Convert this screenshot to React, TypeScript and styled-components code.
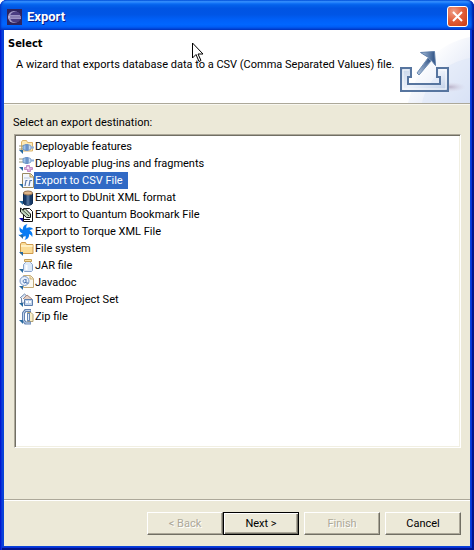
import React, { useState } from "react";
import styled, { createGlobalStyle } from "styled-components";

const GlobalStyle = createGlobalStyle`
  *, *::before, *::after { box-sizing: border-box; }
  body { margin: 0; background: #ffffff; }
  button { font: inherit; }
`;

const Dialog = styled.main`
  position: relative;
  display: flex;
  flex-direction: column;
  min-height: 100vh;
  padding: 0 4px 4px;
  border-radius: 7px 7px 0 0;
  background: #0842d8;
  box-shadow: inset 1px 0 #0019cf, inset 2px 0 #0831d9, inset -2px -2px #00138c, inset -3px -3px #0831d9;
  color: #000000;
  font: 11px/13px Roboto, "Liberation Sans", sans-serif;
`;

const TitleBar = styled.header`
  display: flex;
  align-items: center;
  gap: 5px;
  height: 30px;
  margin: 0 -4px;
  padding: 3px 6px 0 7px;
  border-radius: 7px 7px 0 0;
  background: linear-gradient(
    #0058e0 0%, #3a93ff 6%, #1676f8 10%, #0462ec 16%, #0054e3 28%,
    #0055e5 48%, #0060f8 66%, #0066ff 82%, #005cf4 90%, #003fd0 97%, #0038c0 100%
  );
  box-shadow: inset 2px 0 2px -1px #0030c0, inset -3px 0 2px -1px #0020a0;
`;

const TitleText = styled.h1`
  flex: 1;
  margin: 0;
  color: #ffffff;
  font: bold 13px/18px Roboto, "Noto Sans", sans-serif;
  text-shadow: 1px 1px #0a1883;
`;

const CloseButton = styled.button`
  display: grid;
  place-items: center;
  width: 21px;
  height: 21px;
  padding: 0;
  border: 1px solid #ffffff;
  border-radius: 3px;
  background: radial-gradient(circle at 30% 25%, #f0a088 0%, #e2603c 45%, #c93a10 100%);
`;

const Banner = styled.section`
  display: flex;
  justify-content: space-between;
  height: 74px;
  border-bottom: 1px solid #aca899;
  background: #ffffff;
`;

const BannerText = styled.div`
  min-width: 0;
  padding: 7px 0 0 4px;
`;

const BannerTitle = styled.h2`
  margin: 0;
  font: bold 11px/14px "DejaVu Sans Condensed", "DejaVu Sans", sans-serif;
`;

const BannerMessage = styled.p`
  margin: 7px 0 0 8px;
  white-space: nowrap;
`;

const BannerArt = styled.svg`
  flex: none;
  width: 76px;
  height: 73px;
`;

const Body = styled.section`
  display: flex;
  flex: 1;
  flex-direction: column;
  padding: 11px 9px 51px 10px;
  border-top: 1px solid #f8f7f0;
  background: #ece9d8;
`;

const ListLabel = styled.h3`
  margin: 0 0 5px -1px;
  font-size: 11px;
  font-weight: normal;
`;

const List = styled.div`
  display: flex;
  flex: 1;
  flex-direction: column;
  align-items: flex-start;
  padding: 3px;
  border: 1px solid;
  border-color: #aca899 #ffffff #ffffff #aca899;
  background: #ffffff;
  box-shadow: inset 1px 1px #716f64, inset -1px -1px #f1efe2;
`;

const Row = styled.button`
  display: flex;
  align-items: center;
  height: 17px;
  padding: 0;
  border: 0;
  background: none;
  color: inherit;
  text-align: left;
  outline: none;
`;

const RowIcon = styled.svg`
  flex: none;
  width: 16px;
  height: 16px;
`;

const RowText = styled.span<{ $selected: boolean }>`
  height: 17px;
  padding: 2px 5px 2px 1px;
  background: ${(p) => (p.$selected ? "#316ac5" : "transparent")};
  color: ${(p) => (p.$selected ? "#ffffff" : "inherit")};
  white-space: nowrap;
`;

const Footer = styled.footer`
  display: flex;
  justify-content: flex-end;
  gap: 5px;
  padding: 12px 9px 11px;
  border-top: 1px solid #aca899;
  background: #ece9d8;
  box-shadow: inset 0 1px #ffffff;
`;

const ButtonPair = styled.div`
  display: flex;
`;

const PushButton = styled.button<{ $primary?: boolean }>`
  width: 76px;
  height: 23px;
  padding: 0 0 1px;
  border: 1px solid;
  border-color: ${(p) => (p.$primary ? "#000000" : "#ffffff #716f64 #716f64 #ffffff")};
  background: #ece9d8;
  box-shadow: ${(p) =>
    p.$primary
      ? "inset 1px 1px #ffffff, inset -1px -1px #716f64, inset -2px -2px #aca899"
      : "inset -1px -1px #aca899"};
  color: #000000;

  &:disabled {
    color: #aca899;
    text-shadow: 1px 1px #ffffff;
  }
`;

const Pointer = styled.svg`
  position: absolute;
  top: 42px;
  left: 192px;
  width: 13px;
  height: 21px;
  pointer-events: none;
`;

const Plug = ({ y = 5 }: { y?: number }) => (
  <g transform={`translate(0 ${y})`}>
    <path d="M1 2h4M1 5h4" stroke="#9d9a78" />
    <path d="M5 1.500 8 .5v6l-3-1z" fill="#9cc2ea" stroke="#5c86bb" strokeWidth=".8" />
    <path d="M8 0h2v7H8z" fill="#6b93ca" />
    <path d="M10.500.5 13 2v3l-2.500 1.500z" fill="#c7dcf3" stroke="#6a92c6" strokeWidth=".8" />
    <path d="M13 3.500h3" stroke="#8fb0da" strokeWidth="2" />
  </g>
);

const drawings: Record<string, React.ReactNode> = {
  features: (
    <>
      <path d="M3.500 12V3l1-1.500h4l1 2h5V12z" fill="#fde9b4" stroke="#dbb36a" />
      <Plug y={5} />
    </>
  ),
  plugins: (
    <>
      <Plug y={1} />
      <path d="M6.500 11.500h2v-2h3v2h3v2h-2v2h-3v-2h-3z" fill="#dcaede" stroke="#b57bbb" strokeWidth=".8" />
      <path d="M9 11h2v2H9z" fill="#f8e4f5" />
    </>
  ),
  csv: (
    <>
      <path d="M4.500.5h8l3 3v11h-11z" fill="#f4f8fe" stroke="#9a8b64" />
      <path d="M12 1v3h3" fill="#f8dfa5" stroke="#b29553" />
      <path d="M6 5h6" stroke="#b9c8e0" />
      <path d="M9.500 7.500H8L7 13m7-5.500h-2L11 13" stroke="#5878ad" strokeWidth="1.200" fill="none" />
    </>
  ),
  dbunit: (
    <>
      <path d="M5.500 3v10c0 3 9 3 9 0V3z" fill="#173967" stroke="#102c52" />
      <path d="M8.500 4h3v11h-3z" fill="#4d6e98" />
      <ellipse cx="10" cy="3" rx="4.500" ry="2" fill="#e0b68a" stroke="#93714f" />
    </>
  ),
  quantum: (
    <>
      <path d="M5.500 1.500h6l3 3v10h-9z" fill="#ffffff" stroke="#111111" />
      <path d="M2.500 1v4l6 5.500h4V7L7 1.500 5 3z" fill="#c3d6bf" stroke="#111111" />
      <path d="M4 2.500 11 9" stroke="#3c4a3c" />
      <path d="M5 12.500h7" stroke="#111111" />
    </>
  ),
  torque: (
    <g fill="#087cf4">
      {[0, 60, 120, 180, 240, 300].map((a) => (
        <path key={a} transform={`rotate(${a} 8 8)`} d="M5.500 7C4 4 5.500 1 9.500 0 8 1.500 8 3 9 5.500z" />
      ))}
      <circle cx="8" cy="8" r="3" />
    </g>
  ),
  folder: (
    <>
      <path d="M2.500 12.500V3l1-1.500h4l1 2h6.500v9z" fill="#fbdc96" stroke="#cf9a4c" />
      <path d="M3 5h11.500" stroke="#fff0c4" strokeWidth="2" />
    </>
  ),
  jar: (
    <>
      <path d="M7.500 3.500h5v1l2 2v6l-1 1h-7l-1-1v-6l2-2z" fill="#dce9f9" stroke="#86a2cc" />
      <path d="M6.500 1.500h7v2h-7z" fill="#f7dfa6" stroke="#c39e58" />
      <path d="M8.500 7v5" stroke="#ffffff" strokeWidth="2" />
    </>
  ),
  javadoc: (
    <>
      <path d="M5.500.5h7l3 3v9h-10z" fill="#fbfaf1" stroke="#c4ac7a" />
      <path d="M12 1v3h3" fill="#f9e3b2" stroke="#cdb37c" />
      <circle cx="6.500" cy="6" r="4.500" fill="#e8f1fc" stroke="#7c9bc9" />
      <path d="M8 4v4h2.500M8 5C5 3 4 8 7 8l1-1" fill="none" stroke="#4670ac" />
    </>
  ),
  team: (
    <>
      <path d="M2 6 6.500 2 10 5M3.500 6v5H6" fill="#d5e3f4" stroke="#7188ab" />
      <path d="m5 7 4-4 5 4" fill="#e4cfc2" stroke="#a58880" />
      <path d="M6.500 7.500h8v6h-8z" fill="#c0d3ec" stroke="#5b7dac" />
      <path d="M8 9h2v2H8zm3 0h2v2h-2z" fill="#ffffff" />
    </>
  ),
  zip: (
    <>
      <path d="M9.500 3.500H13l2 2v7H9.500z" fill="#f9efc8" stroke="#b3a274" />
      <path d="M13 1.500H7.500L5.500 4v7.500l2 2.500H13" fill="none" stroke="#6483b0" strokeWidth="3" />
      <path d="M12.500 1.500h-5L5.500 4v7.500l2 2.500h5" fill="none" stroke="#c3d6ef" />
      <path d="M10.500 4v8" stroke="#6888b5" strokeWidth="3" />
      <path d="M10.500 5v6" stroke="#e3eefa" />
    </>
  ),
};

const destinations = [
  ["features", "Deployable features"],
  ["plugins", "Deployable plug-ins and fragments"],
  ["csv", "Export to CSV File"],
  ["dbunit", "Export to DbUnit XML format"],
  ["quantum", "Export to Quantum Bookmark File"],
  ["torque", "Export to Torque XML File"],
  ["folder", "File system"],
  ["jar", "JAR file"],
  ["javadoc", "Javadoc"],
  ["team", "Team Project Set"],
  ["zip", "Zip file"],
];

const EclipseLogo = () => (
  <svg width="15" height="16" viewBox="0 0 15 16" aria-hidden="true">
    <path d="M0 0h15v16H0z" fill="#30245c" />
    <circle cx="7" cy="8" r="6" fill="#a39cc9" />
    <circle cx="8.500" cy="8" r="5.500" fill="#4b3d82" />
    <path d="M2 6.500h11M1 9.500h13" stroke="#9c93c4" />
    <path d="M1 8h13" stroke="#c9c2e2" />
  </svg>
);

const ExportArt = () => (
  <BannerArt viewBox="0 0 76 73" aria-hidden="true">
    <defs>
      <linearGradient id="haze" x1="0" y1="0" x2="1" y2="1">
        <stop offset=".3" stopColor="#ffffff" />
        <stop offset="1" stopColor="#d5def3" />
      </linearGradient>
      <linearGradient id="tray" x1="0" y1="0" x2="1" y2="1">
        <stop offset="0" stopColor="#c4d3e8" />
        <stop offset=".5" stopColor="#edf2fb" />
        <stop offset="1" stopColor="#bccce6" />
      </linearGradient>
      <linearGradient id="arrow" x1="1" y1="0" x2="0" y2="1">
        <stop offset="0" stopColor="#2c4f83" />
        <stop offset="1" stopColor="#b9cbe2" />
      </linearGradient>
      <linearGradient id="head" x1="0" y1="0" x2="1" y2="0">
        <stop offset="0" stopColor="#a9c0dc" />
        <stop offset="1" stopColor="#2c4f83" />
      </linearGradient>
      <radialGradient id="shade">
        <stop offset="0" stopColor="#a99cb5" stopOpacity=".7" />
        <stop offset="1" stopColor="#d8cfdf" stopOpacity="0" />
      </radialGradient>
    </defs>
    <path d="M14 73C24 33 46 13 76 7v66z" fill="url(#haze)" />
    <path d="M28 73c5-23 22-40 48-45v45z" fill="#dce5f7" opacity=".5" />
    <ellipse cx="56" cy="57" rx="16" ry="5" fill="url(#shade)" />
    <path d="M7 38h10v9h-3v7h32v-7h-3v-9h11v23H7z" fill="url(#tray)" stroke="#57759f" strokeWidth="2" />
    <path d="M9 59V40h6m-6 19h43V40h-7" fill="none" stroke="#ffffff" opacity=".8" />
    <path d="m23 43 11-15 3 3-12 14z" fill="url(#arrow)" stroke="#6f8db3" />
    <path d="m26.500 22.500 14-1 1 14-4-5-3-3z" fill="url(#head)" stroke="#5f7ea8" />
  </BannerArt>
);

export default function App() {
  const [selected, setSelected] = useState("csv");
  return (
    <>
      <GlobalStyle />
      <Dialog aria-label="Export">
        <TitleBar>
          <EclipseLogo />
          <TitleText>Export</TitleText>
          <CloseButton aria-label="Close">
            <svg width="13" height="13" viewBox="0 0 13 13" aria-hidden="true">
              <path d="m2 2 9 9M11 2l-9 9" stroke="#ffffff" strokeWidth="2" />
            </svg>
          </CloseButton>
        </TitleBar>
        <Banner>
          <BannerText>
            <BannerTitle>Select</BannerTitle>
            <BannerMessage>A wizard that exports database data to a CSV (Comma Separated Values) file.</BannerMessage>
          </BannerText>
          <ExportArt />
        </Banner>
        <Body>
          <ListLabel id="destinations">Select an export destination:</ListLabel>
          <List role="listbox" aria-labelledby="destinations">
            {destinations.map(([id, name]) => (
              <Row key={id} role="option" aria-selected={id === selected} onClick={() => setSelected(id)}>
                <RowIcon viewBox="0 0 16 16" aria-hidden="true">
                  {drawings[id]}
                  <path d="M1 11h4v4z" fill={id === "quantum" ? "#1713a5" : "#286a9e"} />
                </RowIcon>
                <RowText $selected={id === selected}>{name}</RowText>
              </Row>
            ))}
          </List>
        </Body>
        <Footer>
          <ButtonPair>
            <PushButton disabled>&lt; Back</PushButton>
            <PushButton $primary>Next &gt;</PushButton>
          </ButtonPair>
          <PushButton disabled>Finish</PushButton>
          <PushButton>Cancel</PushButton>
        </Footer>
        <Pointer viewBox="0 0 13 21" aria-hidden="true">
          <path d="M.5 1v15l3.500-3.500 3 7 2-1-3-6.500h5z" fill="#ffffff" stroke="#000000" />
        </Pointer>
      </Dialog>
    </>
  );
}
